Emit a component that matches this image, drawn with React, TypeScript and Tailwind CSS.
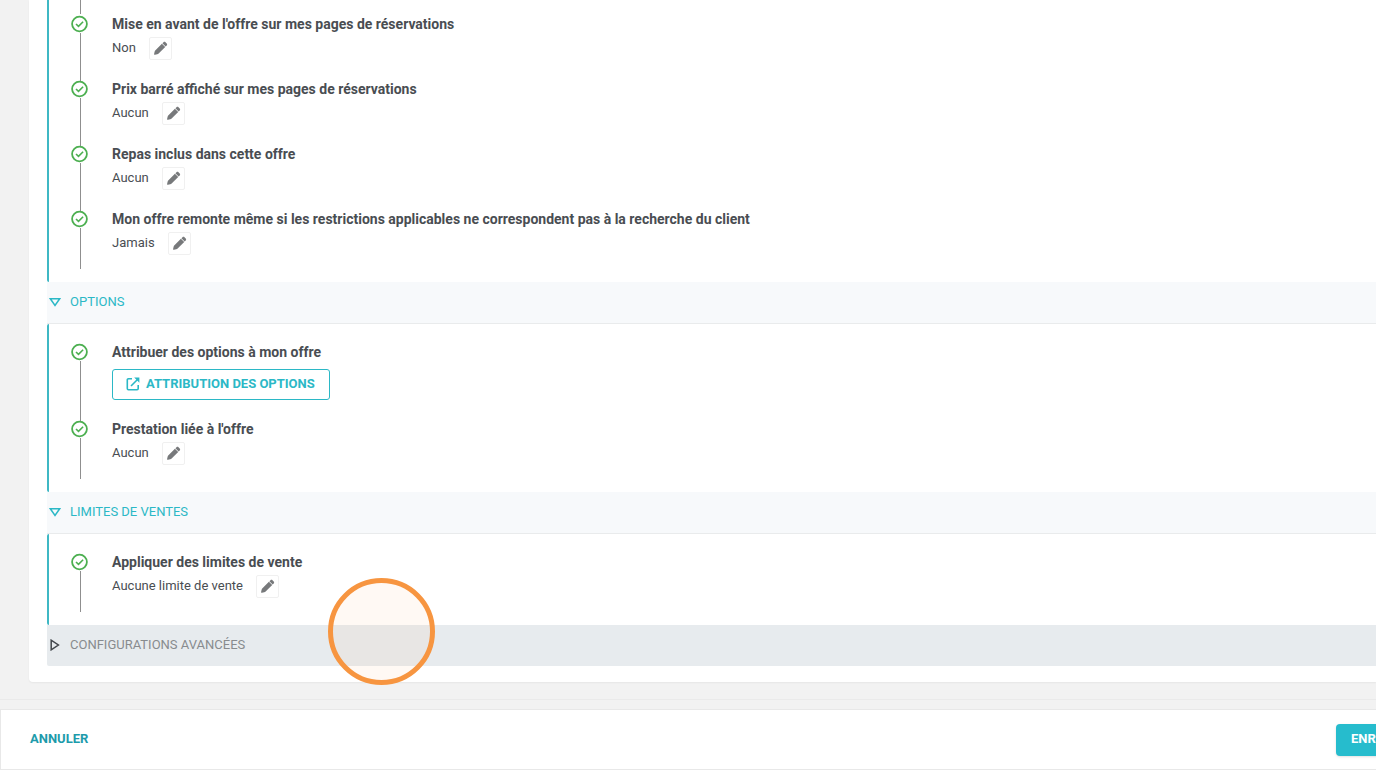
import type { ReactNode } from 'react'

interface StepProps {
  title: string
  last?: boolean
  children: ReactNode
}

function CheckIcon() {
  return (
    <svg width="18" height="18" viewBox="0 0 18 18" fill="none" stroke="#4caf50" className="shrink-0">
      <circle cx="8.5" cy="9" r="7.4" strokeWidth="1.8" />
      <path d="M5 9l2.5 2.4 4.6-4.6" strokeWidth="1.6" />
    </svg>
  )
}

function PencilIcon() {
  return (
    <svg width="15" height="15" viewBox="0 0 15 15" fill="#77797b">
      <path d="M8.9 2.8l3.3 3.3-6.3 6.1c-.6.6-1.1.9-1.8 1.1l-2.1.5c-.7.1-1-.2-.9-.9l.5-2.1c.2-.7.5-1.2 1.1-1.8z" />
      <path d="M9.4 2.3l1.1-1c.6-.6 1.4-.6 2 0l1.2 1.1c.6.6.6 1.4 0 2l-1.1 1.1z" />
    </svg>
  )
}

function ExternalIcon() {
  return (
    <svg width="14" height="14" viewBox="0 0 14 14" fill="none" stroke="currentColor" strokeWidth="1.6">
      <path d="M6 1.8H2.4c-.7 0-1.1.4-1.1 1.1v8.7c0 .7.4 1.1 1.1 1.1h8.7c.7 0 1.1-.4 1.1-1.1V8" />
      <path d="M5 9l7-7" />
      <path d="M8.2.6h5.2v5.2z" fill="currentColor" stroke="none" />
    </svg>
  )
}

function Step({ title, last, children }: StepProps) {
  return (
    <li className="flex">
      <div className="flex w-[41px] shrink-0 flex-col pt-px">
        <CheckIcon />
        <div className={last ? 'ml-[9px] w-px flex-1 bg-[#8f8f8f]' : '-mb-0.5 ml-[9px] w-px flex-1 bg-[#8f8f8f]'} />
      </div>
      <div className={last ? 'pb-3.5' : 'pb-[19px]'}>
        <h3 className="text-[14px] leading-5 font-bold">{title}</h3>
        {children}
      </div>
    </li>
  )
}

function EditableValue({ value }: { value: string }) {
  return (
    <div className="mt-[3px] flex h-[23px] items-start gap-[13px]">
      <span className="text-[13px] leading-[22px]">{value}</span>
      <button
        type="button"
        aria-label="Modifier"
        className="flex size-[23px] items-center justify-center rounded-xs border border-[#f0f0f0] bg-white"
      >
        <PencilIcon />
      </button>
    </div>
  )
}

function SectionHeader({ label }: { label: string }) {
  return (
    <button
      type="button"
      className="flex h-[42px] w-full items-center gap-[9px] border-b border-[#e9ebec] bg-[#f7f9fb] pb-0.5 pl-0.5 text-[13px] leading-5 text-[#2bb8c6]"
    >
      <svg width="12" height="12" viewBox="0 0 12 12" fill="none" stroke="currentColor" strokeWidth="1.5">
        <path d="M1.3 2.7h9.4L6 9.5z" />
      </svg>
      {label}
    </button>
  )
}

function Panel({ children }: { children: ReactNode }) {
  return <ul className="rounded-l-xs border-l-2 border-[#3fb8c4] pt-[18px] pb-[13px] pl-[22px]">{children}</ul>
}

export default function App() {
  return (
    <div className="relative min-h-screen overflow-hidden bg-[#f2f2f2] font-['Roboto',sans-serif] text-[#494d52]">
      <main className="ml-[29px] rounded-bl bg-white pb-4 pl-[18px] shadow-xs">
        {/* Display settings, continued from the steps above */}
        <ul className="rounded-bl-xs border-l-2 border-[#3fb8c4] pb-[13px] pl-[22px]">
          <li aria-hidden="true" className="ml-[9px] h-3.5 w-px bg-[#8f8f8f]" />
          <Step title="Mise en avant de l'offre sur mes pages de réservations">
            <EditableValue value="Non" />
          </Step>
          <Step title="Prix barré affiché sur mes pages de réservations">
            <EditableValue value="Aucun" />
          </Step>
          <Step title="Repas inclus dans cette offre">
            <EditableValue value="Aucun" />
          </Step>
          <Step
            title="Mon offre remonte même si les restrictions applicables ne correspondent pas à la recherche du client"
            last
          >
            <EditableValue value="Jamais" />
          </Step>
        </ul>

        <SectionHeader label="OPTIONS" />
        <Panel>
          <Step title="Attribuer des options à mon offre">
            <button
              type="button"
              className="mt-[7px] flex h-[31px] items-center gap-1.5 rounded-[3px] border border-[#2bb8c6] pr-3.5 pb-0.5 pl-[13px] text-[13px] font-bold text-[#2bb8c6]"
            >
              <ExternalIcon />
              ATTRIBUTION DES OPTIONS
            </button>
          </Step>
          <Step title="Prestation liée à l'offre" last>
            <EditableValue value="Aucun" />
          </Step>
        </Panel>

        <SectionHeader label="LIMITES DE VENTES" />
        <Panel>
          <Step title="Appliquer des limites de vente" last>
            <EditableValue value="Aucune limite de vente" />
          </Step>
        </Panel>

        <button
          type="button"
          className="flex h-[41px] w-full items-center gap-[9px] rounded-bl-xs bg-[#e7ebee] pb-0.5 pl-0.5 text-[13px] leading-5 text-[#888b8e]"
        >
          <svg width="12" height="12" viewBox="0 0 12 12" fill="none" stroke="#43474c" strokeWidth="1.5">
            <path d="M2.2 1.2v9.6L9.4 6z" />
          </svg>
          CONFIGURATIONS AVANCÉES
        </button>
      </main>

      <div className="mt-[17px] h-2.5 border-t border-[#eaeaea]" />

      <footer className="flex h-[61px] items-center justify-between border border-r-0 border-[#e8e8e8] bg-white pl-[29px]">
        <button type="button" className="pb-0.5 text-[13px] leading-5 font-bold text-[#1d9bab]">
          ANNULER
        </button>
        <button
          type="button"
          className="-mr-20 h-8 w-30 rounded bg-[#26bccd] pb-0.5 pl-[15px] text-left text-[13px] font-bold text-white shadow-sm"
        >
          ENREGISTRER
        </button>
      </footer>

      {/* Click marker */}
      <div className="pointer-events-none absolute top-[578px] left-[328px] size-[107px] rounded-full border-5 border-[#f79540] bg-[#f79540]/6" />
    </div>
  )
}
